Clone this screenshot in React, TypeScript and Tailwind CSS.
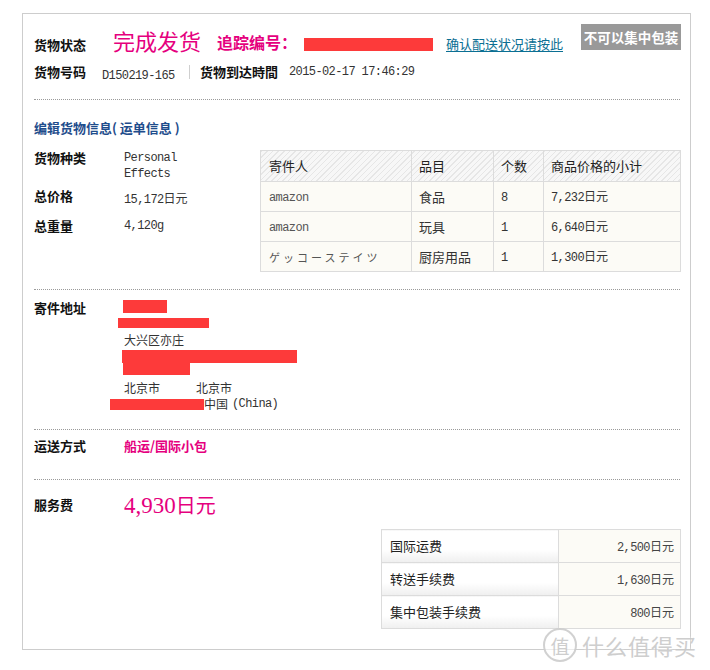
import React from 'react';

const CJK = '"Noto Sans CJK SC", "Noto Sans", sans-serif';
const MONO = '"Liberation Mono", "Noto Sans CJK SC", monospace';

const Mono: React.FC<{ children: React.ReactNode; className?: string }> = ({ children, className = '' }) => (
  <span className={`text-[12px] tracking-[-0.6px] ${className}`} style={{ fontFamily: MONO }}>
    {children}
  </span>
);

const Label: React.FC<{ children: React.ReactNode; className?: string }> = ({ children, className = '' }) => (
  <span className={`text-[13px] font-bold text-[#111] leading-4 ${className}`}>{children}</span>
);

const Dotted: React.FC<{ className?: string }> = ({ className = '' }) => (
  <div className={`border-t border-dotted border-[#9a9a9a] mr-[1px] ${className}`} />
);

const Redact: React.FC<{ className: string }> = ({ className }) => <div className={`bg-[#fd3a3a] ${className}`} />;

const goods = [
  { sender: 'amazon', item: '食品', qty: '8', price: '7,232' },
  { sender: 'amazon', item: '玩具', qty: '1', price: '6,640' },
  { sender: 'ゲッコーステイツ', item: '厨房用品', qty: '1', price: '1,300' },
];

const fees = [
  { name: '国际运费', value: '2,500' },
  { name: '转送手续费', value: '1,630' },
  { name: '集中包装手续费', value: '800' },
];

export default function App() {
  return (
    <div className="relative w-[710px] h-[670px] bg-white pt-[13px] pl-[22px]" style={{ fontFamily: CJK }}>
      <div className="w-[669px] h-[637px] border border-[#cdcdcd] pl-[11px] pr-[9px] pt-[10px] text-[#333]">
        {/* status row */}
        <div className="flex items-end h-[28px]">
          <Label className="w-[79px] mb-[-1px]">货物状态</Label>
          <span className="w-[104px] text-[22px] leading-[24px] text-[#e5007e]">完成发货</span>
          <span className="w-[87px] text-[16px] font-bold leading-5 text-[#e5007e]">追踪编号：</span>
          <Redact className="w-[129px] h-[13px] mb-[1px]" />
          <a className="ml-[13px] text-[13px] leading-4 text-[#0b6f93] underline underline-offset-2">
            确认配送状况请按此
          </a>
          <div className="ml-auto self-start w-[100px] h-[26px] bg-[#999] text-white text-[13.5px] font-bold flex items-center justify-center">
            不可以集中包装
          </div>
        </div>

        <div className="flex items-center h-[16px] mt-[12px]">
          <Label className="w-[68px]">货物号码</Label>
          <div className="w-[87px]">
            <Mono>D150219-165</Mono>
          </div>
          <div className="w-px h-[14px] bg-[#cfcfcf]" />
          <Label className="ml-[10px] w-[89px]">货物到达時間</Label>
          <Mono>2015-02-17 17:46:29</Mono>
        </div>

        <Dotted className="mt-[19px]" />

        <div className="mt-[20px] text-[13px] font-bold leading-4 text-[#1f4d8c]">编辑货物信息( 运单信息 )</div>

        {/* goods info */}
        <div className="flex mt-[14px]">
          <div className="w-[226px]">
            <div className="flex h-[31px]">
              <Label className="w-[90px]">货物种类</Label>
              <Mono className="leading-4 whitespace-pre">{'Personal\nEffects'}</Mono>
            </div>
            <div className="flex items-center h-[30px]">
              <Label className="w-[90px]">总价格</Label>
              <span>
                <Mono>15,172</Mono>
                <span className="text-[12px]">日元</span>
              </span>
            </div>
            <div className="flex items-center h-[30px]">
              <Label className="w-[90px]">总重量</Label>
              <Mono>4,120g</Mono>
            </div>
          </div>

          <table className="w-[421px] border-collapse border border-[#dcdcdc] text-[12px] text-[#333]">
            <thead>
              <tr className="h-[31px] bg-[repeating-linear-gradient(135deg,#e6e6e6_0px,#e6e6e6_1px,#f7f7f7_1px,#f7f7f7_4px)] text-[13px] text-[#222]">
                <th className="w-[151px] border border-[#dcdcdc] pl-2 text-left font-normal">寄件人</th>
                <th className="w-[82px] border border-[#dcdcdc] pl-[7px] text-left font-normal">品目</th>
                <th className="w-[50px] border border-[#dcdcdc] pl-[7px] text-left font-normal">个数</th>
                <th className="border border-[#dcdcdc] pl-[7px] text-left font-normal">商品价格的小计</th>
              </tr>
            </thead>
            <tbody>
              {goods.map((g) => (
                <tr key={g.item} className="h-[30px] bg-[#fcfbf6]">
                  <td className="border border-[#dcdcdc] pl-2">
                    {g.sender === 'amazon' ? (
                      <Mono className="text-[#555]">amazon</Mono>
                    ) : (
                      <span className="text-[11px] tracking-[3px] text-[#555]">{g.sender}</span>
                    )}
                  </td>
                  <td className="border border-[#dcdcdc] pl-[7px] text-[13px]">{g.item}</td>
                  <td className="border border-[#dcdcdc] pl-[7px]">
                    <Mono>{g.qty}</Mono>
                  </td>
                  <td className="border border-[#dcdcdc] pl-[7px]">
                    <Mono>{g.price}</Mono>
                    <span className="text-[12px]">日元</span>
                  </td>
                </tr>
              ))}
            </tbody>
          </table>
        </div>

        <Dotted className="mt-[17px]" />

        {/* address */}
        <div className="flex mt-[10px]">
          <Label className="w-[90px]">寄件地址</Label>
          <div className="text-[12px] text-[#333] mt-[-1px]">
            <div className="h-4 pt-[1px]">
              <Redact className="ml-[-1px] w-[44px] h-[13px]" />
            </div>
            <div className="h-4 pt-[3px]">
              <Redact className="ml-[-6px] w-[91px] h-[10px]" />
            </div>
            <div className="h-4 leading-[14px] pt-[2px]">大兴区亦庄</div>
            <div className="h-4 pt-[3px]">
              <Redact className="ml-[-2px] w-[175px] h-[13px]" />
            </div>
            <div className="h-4">
              <Redact className="ml-[-1px] w-[67px] h-[12px]" />
            </div>
            <div className="h-4 leading-[14px] flex pt-[2px]">
              <span className="w-[72px]">北京市</span>
              <span>北京市</span>
            </div>
            <div className="h-4 leading-[14px] flex items-center pt-[2px]">
              <Redact className="ml-[-14px] w-[94px] h-[11px]" />
              <span>中国</span>
              <Mono className="ml-[4px]">(China)</Mono>
            </div>
          </div>
        </div>

        <Dotted className="mt-[18px]" />

        <div className="flex items-center mt-[8px] h-4">
          <Label className="w-[90px]">运送方式</Label>
          <span className="text-[13px] font-bold text-[#e5007e]">船运/国际小包</span>
        </div>

        <Dotted className="mt-[25px]" />

        <div className="flex items-center mt-[13px] h-[24px]">
          <Label className="w-[90px]">服务费</Label>
          <span className="text-[#e5007e] text-[20px] leading-6">
            <span className="text-[23px]" style={{ fontFamily: '"Liberation Serif", serif' }}>
              4,930
            </span>
            日元
          </span>
        </div>

        <div className="flex justify-end mt-[12px]">
          <table className="w-[300px] border-collapse border border-[#dcdcdc] text-[13px] text-[#222]">
            <tbody>
              {fees.map((f) => (
                <tr key={f.name} className="h-[33px]">
                  <td className="w-[177px] border border-[#dcdcdc] pl-2 bg-[linear-gradient(180deg,#ffffff_60%,#efefef_100%)]">
                    {f.name}
                  </td>
                  <td className="border border-[#dcdcdc] pr-[6px] text-right bg-[#fcfbf6] text-[#444]">
                    <Mono>{f.value}</Mono>
                    <span className="text-[12px]">日元</span>
                  </td>
                </tr>
              ))}
            </tbody>
          </table>
        </div>
      </div>

      {/* watermark */}
      <div className="absolute left-[543px] top-[628px] flex items-center gap-[5px] whitespace-nowrap text-[#c9c9c9] opacity-90 pointer-events-none">
        <div className="w-[34px] h-[34px] shrink-0 rounded-full border-2 border-[#cdcdcd] bg-white/70 flex items-center justify-center text-[19px] leading-none">
          值
        </div>
        <span className="text-[22px] leading-none tracking-[1px] [text-shadow:0_0_3px_#fff]">什么值得买</span>
      </div>
    </div>
  );
}
